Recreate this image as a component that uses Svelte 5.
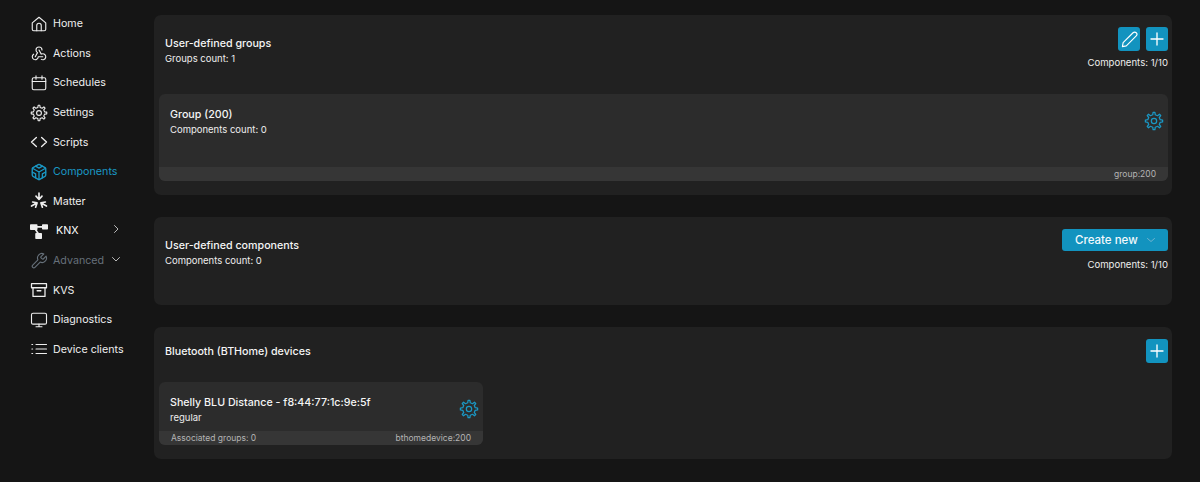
<script>
  // eight tooth cog, built once and shared by sidebar and cards
  function cogPath(cx, cy, outer, inner, teeth) {
    const step = (Math.PI * 2) / teeth;
    const pts = [];
    for (let i = 0; i < teeth; i++) {
      const a = i * step - Math.PI / 2;
      const w = step * 0.17;
      pts.push([a - w * 1.5, inner], [a - w * 0.8, outer], [a + w * 0.8, outer], [a + w * 1.5, inner]);
    }
    return (
      pts
        .map(([a, r], i) => `${i ? "L" : "M"}${(cx + r * Math.cos(a)).toFixed(2)} ${(cy + r * Math.sin(a)).toFixed(2)}`)
        .join("") + "Z"
    );
  }

  const gear = cogPath(12, 12, 10.4, 7.6, 8);

  const nav = [
    { label: "Home", icon: "home" },
    { label: "Actions", icon: "actions" },
    { label: "Schedules", icon: "calendar" },
    { label: "Settings", icon: "gear" },
    { label: "Scripts", icon: "code" },
    { label: "Components", icon: "box", active: true },
    { label: "Matter", icon: "matter" },
    { label: "KNX", icon: "knx", arrow: "right" },
    { label: "Advanced", icon: "wrench", arrow: "down", muted: true },
    { label: "KVS", icon: "archive" },
    { label: "Diagnostics", icon: "monitor" },
    { label: "Device clients", icon: "list" }
  ];
</script>

{#snippet gearIcon()}
  <svg class="gear" viewBox="0 0 24 24" fill="none" stroke="currentColor" stroke-width="1.5" stroke-linejoin="round">
    <path d={gear} />
    <circle cx="12" cy="12" r="3.2" />
  </svg>
{/snippet}

{#snippet plusIcon()}
  <button class="icon-btn" aria-label="Add">
    <svg viewBox="0 0 24 24" fill="none" stroke="#fff" stroke-width="2" stroke-linecap="round"><path d="M12 3v18M3 12h18" /></svg>
  </button>
{/snippet}

{#snippet navIcon(name)}
  <svg class="nav-icon" viewBox="0 0 24 24" fill="none" stroke="currentColor" stroke-width="1.5" stroke-linecap="round" stroke-linejoin="round">
    {#if name === "home"}
      <path d="M3 10.500 12 3l9 7.500V19a2 2 0 0 1-2 2H5a2 2 0 0 1-2-2z" /><path d="M9 21v-7a3 3 0 0 1 6 0v7" />
    {:else if name === "actions"}
      <path d="M4.876 13.610a4 4 0 1 0 6.124 3.390h6" /><path d="M15.066 20.502a4 4 0 1 0 1.934-7.502c-.706 0-1.424.179-2 .5l-3-5.500" /><path d="M16 8a4 4 0 1 0-8 0c0 1.506.77 2.818 2 3.500l-3 5.500" />
    {:else if name === "calendar"}
      <rect x="3" y="5" width="18" height="16" rx="2" /><path d="M3 10h18M8 2.500V7M16 2.500V7" />
    {:else if name === "gear"}
      <path d={gear} /><circle cx="12" cy="12" r="3.200" />
    {:else if name === "code"}
      <path d="M8.500 6 2 12l6.500 6M15.500 6l6.500 6-6.500 6" stroke-width="1.800" />
    {:else if name === "box"}
      <g stroke-width="1.800">
        <path d="M21 16V8a2 2 0 0 0-1-1.730l-7-4a2 2 0 0 0-2 0l-7 4A2 2 0 0 0 3 8v8a2 2 0 0 0 1 1.730l7 4a2 2 0 0 0 2 0l7-4A2 2 0 0 0 21 16z" />
        <path d="M7.500 4.210 12 6.810l4.500-2.600M7.500 19.790V14.600L3 12M21 12l-4.500 2.600v5.190M3.270 6.960 12 12.010l8.730-5.050M12 22.080V12" />
      </g>
    {:else if name === "matter"}
      <g stroke-width="2.200">
        <path d="M12 1.500V9M8 5.500l4 4.500 4-4.500" transform="rotate(0 12 13)" />
        <path d="M12 1.500V9M8 5.500l4 4.500 4-4.500" transform="rotate(120 12 13)" />
        <path d="M12 1.500V9M8 5.500l4 4.500 4-4.500" transform="rotate(240 12 13)" />
      </g>
    {:else if name === "knx"}
      <g fill="currentColor" stroke="none">
        <rect x="0" y="3" width="10" height="7.500" rx="1" /><rect x="16" y="3" width="8" height="7" rx="1" /><rect x="7" y="14.500" width="9" height="8" rx="1" />
      </g>
      <path d="M8 6.500h10M6 8l6 9" stroke-width="2.200" />
    {:else if name === "wrench"}
      <path d="M14.700 6.300a1 1 0 0 0 0 1.400l1.600 1.600a1 1 0 0 0 1.400 0l3.770-3.770a6 6 0 0 1-7.940 7.940l-6.910 6.910a2.120 2.120 0 0 1-3-3l6.910-6.910a6 6 0 0 1 7.940-7.940l-3.760 3.760z" />
    {:else if name === "archive"}
      <path d="M2 3.500h20v5.500H2zM4 9v11.500h16V9M9.500 13h5" stroke-width="1.700" />
    {:else if name === "monitor"}
      <rect x="2" y="3" width="20" height="14.500" rx="2" /><path d="M12 17.500V21M8 21h8" />
    {:else if name === "list"}
      <path d="M8 6h14M8 12h14M8 18h14M2.500 6h1M2.500 12h1M2.500 18h1" stroke-width="1.500" />
    {/if}
  </svg>
{/snippet}

<div class="page">
  <nav class="sidebar">
    {#each nav as item}
      <div class="nav-item" class:active={item.active} class:muted={item.muted} class:knx={item.icon === "knx"}>
        {@render navIcon(item.icon)}
        <span class="nav-label">{item.label}</span>
        {#if item.arrow === "right"}
          <svg class="arrow" viewBox="0 0 10 10" fill="none" stroke="#b8b8b8" stroke-width="1" stroke-linecap="round" stroke-linejoin="round"><path d="M3.500 1.500 7 5 3.500 8.500" /></svg>
        {:else if item.arrow === "down"}
          <svg class="arrow" viewBox="0 0 10 10" fill="none" stroke="#b8b8b8" stroke-width="1" stroke-linecap="round" stroke-linejoin="round"><path d="M1.500 3.500 5 7l3.500-3.500" /></svg>
        {/if}
      </div>
    {/each}
  </nav>

  <main class="content">
    <section class="card groups">
      <header class="card-head">
        <div class="head-text">
          <h2>User-defined groups</h2>
          <p>Groups count: 1</p>
        </div>
        <div class="head-actions">
          <div class="btn-row">
            <button class="icon-btn" aria-label="Edit">
              <svg class="pencil" viewBox="0 0 24 24" fill="none" stroke="#fff" stroke-width="1.600" stroke-linejoin="round"><path d="M17 2.500a3 3 0 0 1 4.500 4.500L7.500 21 2 22l1-5.500z" /></svg>
            </button>
            {@render plusIcon()}
          </div>
          <span class="limit">Components: 1/10</span>
        </div>
      </header>
      <div class="item wide">
        <div class="item-body tall">
          <div>
            <h3>Group (200)</h3>
            <p>Components count: 0</p>
          </div>
          {@render gearIcon()}
        </div>
        <div class="item-foot"><span></span><span>group:200</span></div>
      </div>
    </section>

    <section class="card components">
      <header class="card-head">
        <div class="head-text">
          <h2>User-defined components</h2>
          <p>Components count: 0</p>
        </div>
        <div class="head-actions">
          <button class="create">
            <span>Create new</span>
            <svg viewBox="0 0 10 10" fill="none" stroke="#6fb3cf" stroke-width="1" stroke-linecap="round" stroke-linejoin="round"><path d="M1.500 3.500 5 6.500l3.500-3" /></svg>
          </button>
          <span class="limit">Components: 1/10</span>
        </div>
      </header>
    </section>

    <section class="card devices">
      <header class="card-head center">
        <h2>Bluetooth (BTHome) devices</h2>
        {@render plusIcon()}
      </header>
      <div class="item narrow">
        <div class="item-body">
          <div>
            <h3>Shelly BLU Distance - f8:44:77:1c:9e:5f</h3>
            <p>regular</p>
          </div>
          {@render gearIcon()}
        </div>
        <div class="item-foot"><span>Associated groups: 0</span><span>bthomedevice:200</span></div>
      </div>
    </section>
  </main>
</div>

<style>
  :global(body) {
    margin: 0;
    background: #151515;
  }

  .page {
    display: flex;
    height: 482px;
    overflow: hidden;
    background: #151515;
    color: #f4f4f4;
    font-family: Inter, "Liberation Sans", sans-serif;
  }

  .sidebar {
    flex: 0 0 154px;
    box-sizing: border-box;
    padding: 9px 0 0 30px;
    display: flex;
    flex-direction: column;
  }

  .nav-item {
    height: 29.600px;
    display: flex;
    align-items: center;
    gap: 5px;
    font-size: 10.700px;
    color: #eeeeee;
  }

  .nav-item.active {
    color: #1a97c4;
  }

  .nav-item.muted {
    color: #66707a;
  }

  .nav-item.knx .nav-label {
    margin-left: 3px;
    color: #fff;
  }

  .nav-icon {
    width: 18px;
    height: 18px;
    flex: none;
  }

  .nav-label {
    white-space: nowrap;
  }

  .arrow {
    position: absolute;
    left: 111px;
    width: 10px;
    height: 10px;
    margin-top: -4px;
  }

  .content {
    width: 1018px;
    padding-top: 15px;
    display: flex;
    flex-direction: column;
    gap: 22px;
  }

  .card {
    box-sizing: border-box;
    background: #212121;
    border-radius: 7px;
  }

  .groups {
    height: 180px;
    padding: 0 4px 0 5px;
  }

  .components {
    height: 88px;
  }

  .devices {
    height: 132px;
    padding: 0 4px 0 5px;
  }

  .card-head {
    display: flex;
    justify-content: space-between;
    align-items: flex-start;
  }

  .groups .card-head {
    height: 79px;
    padding: 12px 0 0 6px;
    box-sizing: border-box;
  }

  .components .card-head {
    padding: 12px 4px 0 11px;
  }

  .card-head.center {
    height: 55px;
    align-items: center;
    padding: 0 0 7px 6px;
    box-sizing: border-box;
  }

  .card-head.center h2 {
    margin-top: 2px;
  }

  .head-text {
    padding-top: 10px;
  }

  h2,
  h3 {
    margin: 0;
    font-size: 10.700px;
    line-height: 14px;
    font-weight: 500;
    color: #f5f5f5;
  }

  p {
    margin: 2px 0 0;
    font-size: 9.500px;
    line-height: 12px;
    color: #eeeeee;
  }

  .head-actions {
    display: flex;
    flex-direction: column;
    align-items: flex-end;
  }

  .btn-row {
    display: flex;
    gap: 6px;
  }

  .limit {
    margin-top: 6px;
    font-size: 9.600px;
    line-height: 12px;
    color: #eeeeee;
  }

  .components .limit {
    margin-top: 8px;
  }

  .icon-btn {
    width: 22px;
    height: 24px;
    padding: 0;
    border: none;
    border-radius: 3px;
    background: #1293bf;
    display: flex;
    align-items: center;
    justify-content: center;
  }

  .icon-btn svg {
    width: 16px;
    height: 16px;
  }

  .icon-btn svg.pencil {
    width: 17px;
    height: 17px;
  }

  .create {
    width: 106px;
    height: 22px;
    padding: 0 12px 0 13px;
    border: none;
    border-radius: 3px;
    background: #1293bf;
    color: #f2f9fc;
    font: 500 11.500px Inter, "Liberation Sans", sans-serif;
    display: flex;
    align-items: center;
    justify-content: space-between;
  }

  .create svg {
    width: 10px;
    height: 10px;
  }

  .item {
    background: #2c2c2c;
    border-radius: 6px;
    overflow: hidden;
  }

  .item.narrow {
    width: 324px;
  }

  .item-body {
    box-sizing: border-box;
    display: flex;
    justify-content: space-between;
    padding: 14px 4px 0 11px;
    height: 49px;
  }

  .item-body.tall {
    height: 73px;
  }

  .gear {
    width: 20px;
    height: 20px;
    color: #1a97c4;
    margin-top: 3px;
  }

  .item-foot {
    height: 14px;
    padding: 0 12px;
    background: #363636;
    display: flex;
    justify-content: space-between;
    align-items: center;
    font-size: 8.500px;
    color: #b4b4b4;
  }
</style>
